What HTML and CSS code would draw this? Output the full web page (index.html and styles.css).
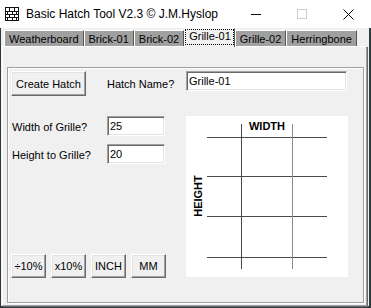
FILE: index.html
```html
<!DOCTYPE html>
<html lang="en">
<head>
    <meta charset="UTF-8">
    <title>Basic Hatch Tool</title>
    <link rel="stylesheet" href="styles.css">
</head>
<body>

    <div class="window">
        <header class="titlebar">
            <svg class="app-icon" width="14" height="14" viewBox="0 0 14 14">
                <rect x="0.5" y="0.5" width="13" height="13" fill="#fff" stroke="#111"/>
                <path d="M0 4.5H14M0 7.5H14M0 10.5H14M4.5 1V4M9.5 1V4M2.5 5V7M7.5 5V7M11.5 5V7M4.5 8V10M9.5 8V10M2.5 11V13M7.5 11V13M11.5 11V13" stroke="#111"/>
            </svg>
            <span class="title">Basic Hatch Tool V2.3 © J.M.Hyslop</span>
            <div class="caption-buttons">
                <span class="cap-btn">
                    <svg width="10" height="10" viewBox="0 0 10 10"><path d="M0 5.5H10" stroke="#000"/></svg>
                </span>
                <span class="cap-btn">
                    <svg width="10" height="10" viewBox="0 0 10 10"><rect x="0.5" y="0.5" width="9" height="9" fill="none" stroke="#ccc"/></svg>
                </span>
                <span class="cap-btn">
                    <svg width="11" height="11" viewBox="0 0 11 11"><path d="M0.5 0.5L10.5 10.5M10.5 0.5L0.5 10.5" stroke="#000"/></svg>
                </span>
            </div>
        </header>

        <div class="client">
            <nav class="tabs">
                <div class="tab">Weatherboard</div>
                <div class="tab">Brick-01</div>
                <div class="tab">Brick-02</div>
                <div class="tab active"><span class="focus">Grille-01</span></div>
                <div class="tab">Grille-02</div>
                <div class="tab">Herringbone</div>
            </nav>

            <section class="page">
                <div class="group">
                    <div class="head-row">
                        <div class="head-left">
                            <button class="btn btn-create">Create Hatch</button>
                            <label class="name-label">Hatch Name?</label>
                        </div>
                        <input type="text" class="field name-field" value="Grille-01">
                    </div>

                    <div class="main-row">
                        <div class="settings">
                            <div class="field-row">
                                <label>Width of Grille?</label>
                                <input type="text" class="field" value="25">
                            </div>
                            <div class="field-row">
                                <label>Height to Grille?</label>
                                <input type="text" class="field" value="20">
                            </div>
                            <div class="unit-buttons">
                                <button class="btn btn-unit">÷10%</button>
                                <button class="btn btn-unit">x10%</button>
                                <button class="btn btn-unit">INCH</button>
                                <button class="btn btn-unit">MM</button>
                            </div>
                        </div>

                        <div class="preview">
                            <svg width="162" height="161" viewBox="0 0 162 161" shape-rendering="crispEdges">
                                <g stroke="#4a4a4a">
                                    <path d="M21 21.5H141M21 60.5H141M21 100.5H141M21 141.5H141"/>
                                    <path d="M55.5 8V153"/>
                                </g>
                                <path d="M106.5 8V153" stroke="#8c8c8c"/>
                                <text class="axis" x="81" y="14" text-anchor="middle">WIDTH</text>
                                <text class="axis" x="16" y="80" text-anchor="middle" transform="rotate(-90 16 80)">HEIGHT</text>
                            </svg>
                        </div>
                    </div>
                </div>
            </section>
        </div>
    </div>

</body>
</html>
```

FILE: styles.css
```css
body {
    margin: 0;
    background-color: #2d3b3b;
    font-family: "Liberation Sans", Arial, sans-serif;
    font-size: 11px;
    color: #000;
}

.window {
    width: 371px;
    height: 308px;
    display: flex;
    flex-direction: column;
    background-color: #f0f0f0;
}

/* title bar */

.titlebar {
    flex: none;
    height: 28px;
    background-color: #fff;
    display: flex;
    align-items: center;
}

.app-icon {
    margin-left: 5px;
}

.title {
    margin-left: 7px;
    font-size: 12px;
}

.caption-buttons {
    margin-left: auto;
    display: flex;
    height: 28px;
}

.cap-btn {
    width: 46px;
    display: flex;
    align-items: center;
    justify-content: center;
}

/* client area */

.client {
    flex: 1;
    display: flex;
    flex-direction: column;
    border-left: 1px solid #2d3b3b;
    border-right: 2px solid #2d3b3b;
    border-bottom: 2px solid #2d3b3b;
}

.tabs {
    flex: none;
    height: 18px;
    padding-left: 3px;
    display: flex;
    align-items: flex-end;
}

.tab {
    height: 16px;
    box-sizing: border-box;
    padding: 1px 4px 0;
    background-color: #a0a0a0;
    border-top: 1px solid #fff;
    border-left: 1px solid #fff;
    border-right: 1px solid #555;
    line-height: 14px;
    white-space: nowrap;
}

.tab.active {
    position: relative;
    z-index: 1;
    height: 19px;
    margin-bottom: -1px;
    padding: 1px 1px 0;
    background-color: #f0f0f0;
}

.tab .focus {
    display: block;
    padding: 0 2px 0 3px;
    height: 14px;
    line-height: 13px;
    outline: 1px dotted #000;
    outline-offset: 0;
}

.page {
    flex: 1;
    width: 365px;
    margin-left: 1px;
    box-sizing: border-box;
    border-top: 1px solid #fff;
    border-left: 1px solid #fff;
    border-right: 1px solid #a0a0a0;
    border-bottom: 1px solid #a0a0a0;
    box-shadow: 1px 1px 0 #696969;
}

.group {
    width: 357px;
    height: 236px;
    margin: 20px 0 0 4px;
    box-sizing: border-box;
    padding: 3px 0 0 3px;
    border: 1px solid #a0a0a0;
    box-shadow: inset 1px 1px 0 #fff, 1px 1px 0 #fff;
}

/* controls */

.btn {
    font-family: inherit;
    font-size: 11px;
    color: #000;
    background-color: #f0f0f0;
    padding: 0;
    box-sizing: border-box;
    border: 1px solid;
    border-color: #fff #696969 #696969 #fff;
    box-shadow: inset -1px -1px 0 #a0a0a0, inset 1px 1px 0 #e3e3e3;
}

.field {
    font-family: inherit;
    font-size: 11px;
    color: #000;
    height: 20px;
    box-sizing: border-box;
    padding: 1px 2px;
    background-color: #fff;
    border: 1px solid;
    border-color: #a0a0a0 #fff #fff #a0a0a0;
    box-shadow: inset 1px 1px 0 #696969, inset -1px -1px 0 #e3e3e3;
    outline: none;
}

.head-row {
    display: grid;
    grid-template-columns: 175px 161px;
    height: 25px;
}

.head-left {
    display: flex;
    align-items: center;
}

.btn-create {
    width: 75px;
    height: 25px;
}

.name-label {
    margin-left: 21px;
    padding-top: 1px;
}

.name-field {
    width: 161px;
}

.main-row {
    display: grid;
    grid-template-columns: 175px 162px;
    height: 161px;
    margin-top: 20px;
}

.settings {
    display: flex;
    flex-direction: column;
}

.field-row {
    display: grid;
    grid-template-columns: 96px 58px;
    align-items: center;
    height: 20px;
    margin-bottom: 8px;
}

.field-row label {
    padding: 2px 0 0 1px;
}

.field-row .field {
    width: 58px;
}

.unit-buttons {
    margin-top: auto;
    margin-bottom: -1px;
    display: flex;
    gap: 5px;
}

.btn-unit {
    width: 35px;
    height: 24px;
}

.preview {
    background-color: #fff;
}

.preview svg {
    display: block;
}

.axis {
    font-family: "Liberation Sans", Arial, sans-serif;
    font-size: 11px;
    font-weight: bold;
    fill: #000;
}
```
